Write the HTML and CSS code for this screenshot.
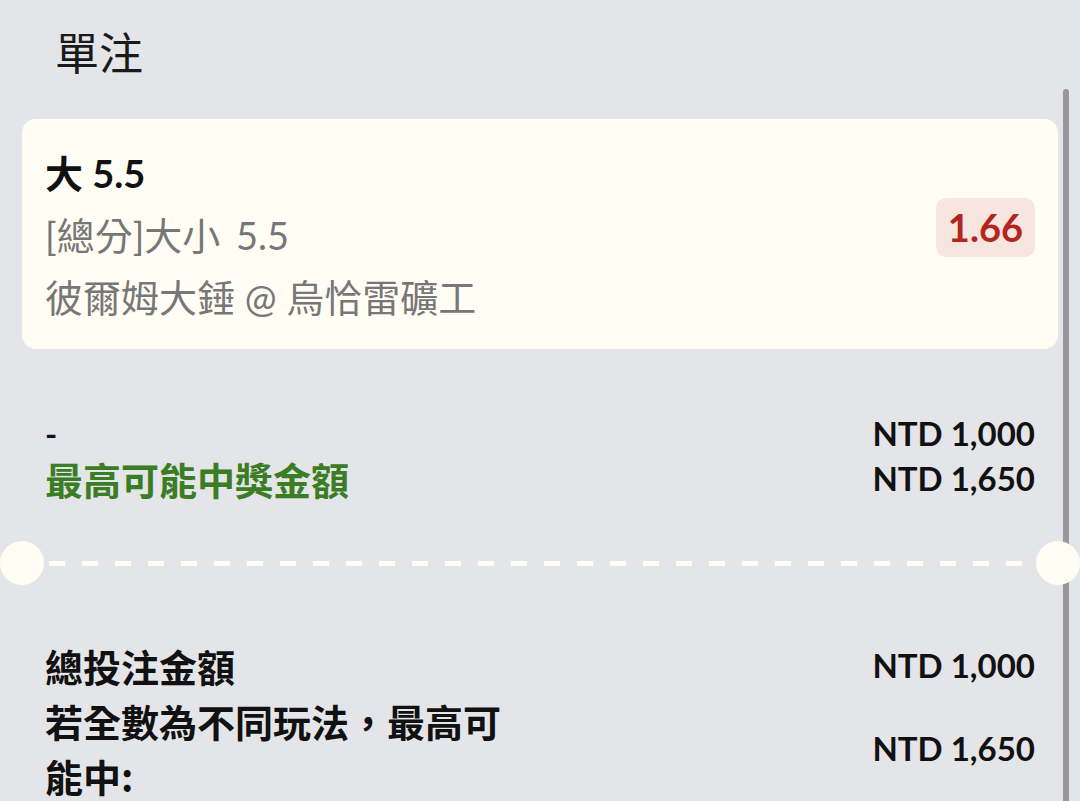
FILE: index.html
```html
<!DOCTYPE html>
<html lang="zh-Hant">
<head>
    <meta charset="UTF-8">
    <meta name="viewport" content="width=device-width, initial-scale=1.0">
    <title>單注</title>
    <link rel="stylesheet" href="styles.css">
</head>
<body>
    <div class="slip">
        <h1 class="slip-title">單注</h1>

        <div class="bet-card">
            <div class="bet-info">
                <div class="bet-line bet-pick">大 5.5</div>
                <div class="bet-line bet-market">[總分]大小 5.5</div>
                <div class="bet-line bet-match">彼爾姆大錘 @ 烏恰雷礦工</div>
            </div>
            <div class="odds">1.66</div>
        </div>

        <div class="summary">
            <div class="summary-labels">
                <div class="summary-line">-</div>
                <div class="summary-line payout-label zh">最高可能中獎金額</div>
            </div>
            <div class="summary-values">
                <div class="summary-line">NTD 1,000</div>
                <div class="summary-line">NTD 1,650</div>
            </div>
        </div>

        <div class="divider">
            <span class="notch"></span>
            <span class="dash-line"></span>
            <span class="notch"></span>
        </div>

        <div class="totals">
            <div class="total-row">
                <div class="total-label zh">總投注金額</div>
                <div class="amount">NTD 1,000</div>
            </div>
            <div class="total-row">
                <div class="total-label zh">若全數為不同玩法，最高可能中:</div>
                <div class="amount">NTD 1,650</div>
            </div>
        </div>

        <div class="scrollbar"></div>
    </div>
</body>
</html>
```

FILE: styles.css
```css
body {
    margin: 0;
    background-color: #e4e5e8;
    font-family: 'Lato', 'Noto Sans CJK TC', sans-serif;
    font-size: 33px;
    color: #111111;
}

.slip {
    position: relative;
    min-height: 100vh;
    overflow: hidden;
}

.zh {
    font-family: 'Noto Sans CJK TC', sans-serif;
    font-size: 38px;
}

.slip-title {
    margin: 0;
    padding: 29px 0 0 55px;
    font-family: 'Noto Sans CJK TC', sans-serif;
    font-size: 44px;
    line-height: 44px;
    font-weight: 400;
    color: #1a1a1a;
}

.bet-card {
    margin: 46px 22px 0;
    padding: 23px 23px 21px;
    background: #fffdf4;
    border-radius: 14px;
    display: flex;
    align-items: center;
    justify-content: space-between;
    font-size: 38px;
}

.bet-line {
    height: 62px;
    line-height: 62px;
    white-space: nowrap;
}

.bet-pick {
    font-weight: 700;
    color: #111111;
}

.bet-market,
.bet-match {
    color: #777777;
}

.bet-market {
    word-spacing: 6px;
}

.odds {
    margin-bottom: 15px;
    padding: 0 12px;
    height: 59px;
    line-height: 59px;
    background: #f7e6df;
    border-radius: 10px;
    color: #b3261e;
    font-size: 38px;
    font-weight: 700;
}

.summary {
    margin: 62px 45px 0;
    display: flex;
    justify-content: space-between;
    font-weight: 700;
}

.summary-line {
    height: 45px;
    line-height: 45px;
}

.summary-values {
    text-align: right;
}

.payout-label {
    color: #3b7d24;
}

.divider {
    position: relative;
    z-index: 1;
    margin-top: 40px;
    height: 44px;
    display: flex;
    align-items: center;
}

.notch {
    width: 44px;
    height: 44px;
    border-radius: 50%;
    background: #fffdf4;
    flex-shrink: 0;
}

.dash-line {
    flex: 1;
    height: 5px;
    margin: 0 5px;
    background: repeating-linear-gradient(90deg, #fffdf4 0 16px, transparent 16px 33px);
}

.totals {
    margin: 53px 45px 0;
    font-weight: 700;
}

.total-row {
    display: flex;
    align-items: center;
    justify-content: space-between;
}

.total-label {
    width: 480px;
    line-height: 55px;
}

.amount {
    line-height: 45px;
}

.scrollbar {
    position: absolute;
    top: 89px;
    right: 11px;
    bottom: 0;
    width: 6px;
    border-radius: 3px 3px 0 0;
    background: #98989c;
}
```
